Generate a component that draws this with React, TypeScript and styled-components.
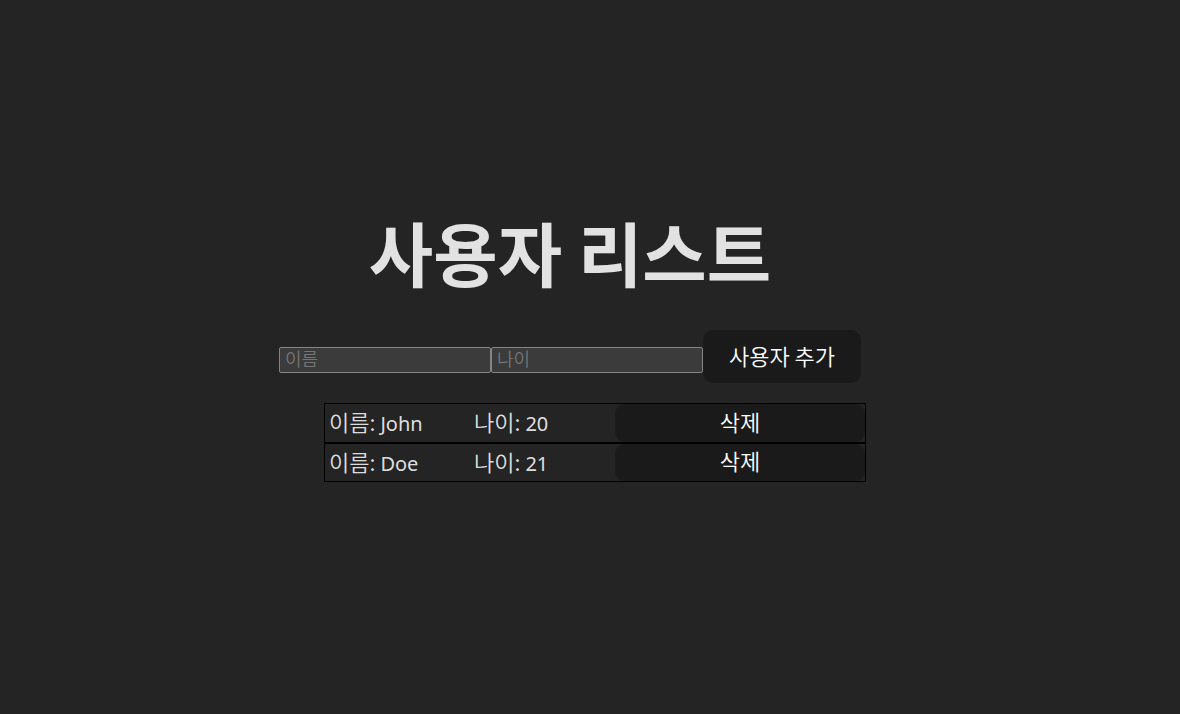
import React, { useState } from "react";
import styled, { createGlobalStyle } from "styled-components";

const GlobalStyle = createGlobalStyle`
  * { box-sizing: border-box; }
  body {
    margin: 0;
    background: #242424;
    color: rgba(255, 255, 255, 0.87);
    font-family: "Noto Sans", "Noto Sans CJK KR", sans-serif;
  }
`;

const Page = styled.main`
  min-height: 100vh;
  padding: 0 40px 14px 0;
  display: flex;
  flex-direction: column;
  align-items: center;
  justify-content: center;
`;

const Title = styled.h1`
  margin: 0 0 44px;
  font-family: "Noto Sans CJK KR", sans-serif;
  font-size: 70px;
  line-height: 68px;
  font-weight: 700;
`;

const UserForm = styled.form`
  display: flex;
  align-items: flex-end;
`;

const TextField = styled.input`
  width: 212px;
  height: 26px;
  margin: 0 0 10px;
  padding: 0 5px 4px;
  border: 1px solid #858585;
  border-radius: 2px;
  background: #3b3b3b;
  color: #fff;
  font-family: "Noto Sans CJK KR", sans-serif;
  font-size: 18px;

  &::placeholder {
    color: #757575;
    font-weight: 350;
    opacity: 1;
  }
`;

const Button = styled.button`
  padding: 0 0 4px;
  border: 1px solid transparent;
  border-radius: 10px;
  background: #1a1a1a;
  color: #fff;
  font-family: "Noto Sans CJK KR", sans-serif;
  font-size: 22px;
  font-weight: 350;
  line-height: 30px;
  cursor: pointer;
`;

const AddButton = styled(Button)`
  width: 158px;
  height: 53px;
`;

const UserList = styled.ul`
  min-height: 79px;
  margin: 20px 0 0;
  padding: 0 0 0 50px;
  list-style: none;
  display: grid;
  grid-auto-rows: 1fr;
`;

const UserRow = styled.li`
  border: 1px solid #000;
  display: grid;
  grid-template-columns: 145px 145px 250px;
`;

const Cell = styled.span`
  padding: 2px 4px 0;
  display: flex;
  align-items: baseline;
  gap: 5px;
  font-size: 20px;
  line-height: 30px;
`;

const Label = styled.span`
  font-family: "Noto Sans CJK KR", sans-serif;
  font-size: 22px;
  font-weight: 350;
`;

export default function App() {
  const [users, setUsers] = useState([
    { id: 1, name: "John", age: "20" },
    { id: 2, name: "Doe", age: "21" },
  ]);
  const [name, setName] = useState("");
  const [age, setAge] = useState("");

  const addUser = (event: React.FormEvent) => {
    event.preventDefault();
    if (!name || !age) return;
    setUsers([...users, { id: Date.now(), name, age }]);
    setName("");
    setAge("");
  };

  return (
    <>
      <GlobalStyle />
      <Page>
        <Title>사용자 리스트</Title>
        <UserForm onSubmit={addUser}>
          <TextField aria-label="이름" placeholder="이름" value={name} onChange={(e) => setName(e.target.value)} />
          <TextField aria-label="나이" placeholder="나이" value={age} onChange={(e) => setAge(e.target.value)} />
          <AddButton type="submit">사용자 추가</AddButton>
        </UserForm>
        <UserList>
          {users.map((user) => (
            <UserRow key={user.id}>
              <Cell><Label>이름:</Label>{user.name}</Cell>
              <Cell><Label>나이:</Label>{user.age}</Cell>
              <Button type="button" onClick={() => setUsers(users.filter((u) => u.id !== user.id))}>
                삭제
              </Button>
            </UserRow>
          ))}
        </UserList>
      </Page>
    </>
  );
}
